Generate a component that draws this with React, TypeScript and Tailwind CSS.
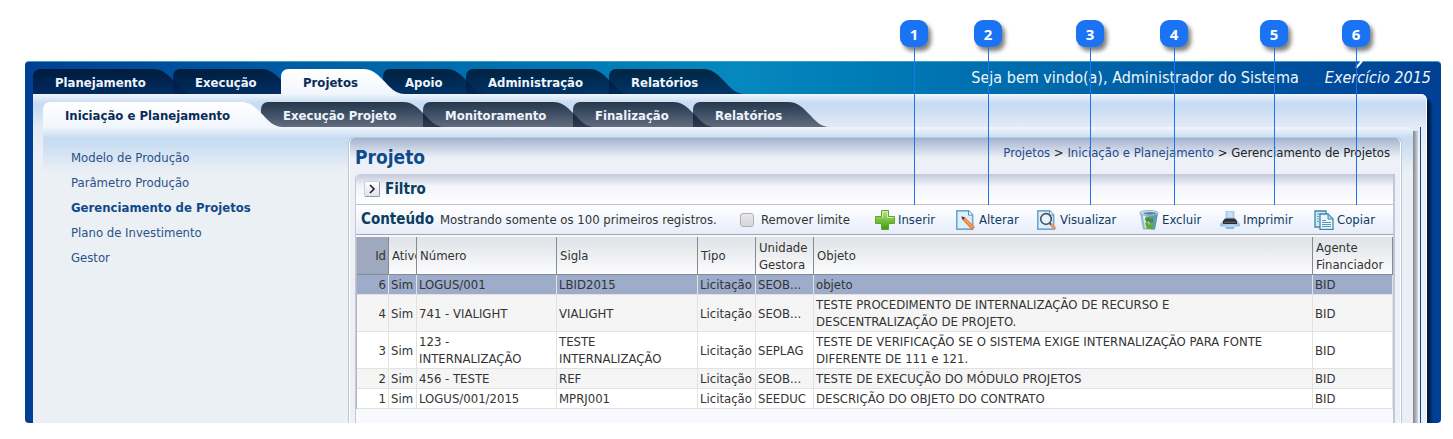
import type { ReactNode } from "react";

type TabItem = { label: string; width: string; active?: boolean };

const mainTabs: TabItem[] = [
  { label: "Planejamento", width: "w-[162px]" },
  { label: "Execução", width: "w-[130px]" },
  { label: "Projetos", width: "w-[124px]", active: true },
  { label: "Apoio", width: "w-[105px]" },
  { label: "Administração", width: "w-[165px]" },
  { label: "Relatórios", width: "w-[136px]" },
];

const subTabs: TabItem[] = [
  { label: "Iniciação e Planejamento", width: "w-[240px]", active: true },
  { label: "Execução Projeto", width: "w-[184px]" },
  { label: "Monitoramento", width: "w-[172px]" },
  { label: "Finalização", width: "w-[142px]" },
  { label: "Relatórios", width: "w-[137px]" },
];

const menu = [
  "Modelo de Produção",
  "Parâmetro Produção",
  "Gerenciamento de Projetos",
  "Plano de Investimento",
  "Gestor",
];

const rows = [
  [6, "LOGUS/001", "LBID2015", "SEOB...", "objeto"],
  [
    4,
    "741 - VIALIGHT",
    "VIALIGHT",
    "SEOB...",
    "TESTE PROCEDIMENTO DE INTERNALIZAÇÃO DE RECURSO E DESCENTRALIZAÇÃO DE PROJETO.",
  ],
  [
    3,
    "123 - INTERNALIZAÇÃO",
    "TESTE INTERNALIZAÇÃO",
    "SEPLAG",
    "TESTE DE VERIFICAÇÃO SE O SISTEMA EXIGE INTERNALIZAÇÃO PARA FONTE DIFERENTE DE 111 e 121.",
  ],
  [2, "456 - TESTE", "REF", "SEOB...", "TESTE DE EXECUÇÃO DO MÓDULO PROJETOS"],
  [1, "LOGUS/001/2015", "MPRJ001", "SEEDUC", "DESCRIÇÃO DO OBJETO DO CONTRATO"],
];

const callouts = [
  "left-[900px]",
  "left-[974px]",
  "left-[1076px]",
  "left-[1160px]",
  "left-[1260px]",
  "left-[1342px]",
];

const tabColors = {
  main: { fill: "from-[#00142dd9] to-[#002454cc]", top: "#00142d", topA: 0.85, bottom: "#002454", bottomA: 0.8 },
  sub: { fill: "from-[#000f23cc] to-[#141e379e]", top: "#000f23", topA: 0.8, bottom: "#141e37", bottomA: 0.62 },
  active: { fill: "from-[#ffffff] to-[#f1f6fd]", top: "#ffffff", topA: 1, bottom: "#f1f6fd", bottomA: 1 },
};

function Tab({ item, level }: { item: TabItem; level: "main" | "sub" }) {
  const kind = item.active ? "active" : level;
  const c = tabColors[kind];
  const id = `tab-${level}-${kind}-${item.label.length}`;
  return (
    <button
      type="button"
      className={`flex h-[25px] shrink-0 -mr-[22px] text-left text-[13px] leading-[27px] font-bold whitespace-nowrap ${item.width} ${
        item.active ? "relative z-10 text-[#0a2c55]" : "text-[#eef4fb]"
      }`}
    >
      <span className={`block h-full flex-1 min-w-0 rounded-tl-[7px] bg-linear-to-b pl-[22px] ${c.fill}`}>
        {item.label}
      </span>
      <svg className="h-full w-[42px] shrink-0" viewBox="0 0 42 25">
        <defs>
          <linearGradient id={id} x1="0" y1="0" x2="0" y2="1">
            <stop offset="0" stopColor={c.top} stopOpacity={c.topA} />
            <stop offset="1" stopColor={c.bottom} stopOpacity={c.bottomA} />
          </linearGradient>
        </defs>
        <path d="M0 0C9 0 13 4 20 11S32 25 42 25H0Z" fill={`url(#${id})`} />
      </svg>
    </button>
  );
}

function AddIcon() {
  return (
    <svg className="size-5" viewBox="0 0 20 20">
      <defs>
        <linearGradient id="add" x1="0" y1="0" x2="0" y2="1">
          <stop offset="0" stopColor="#c5e58a" />
          <stop offset=".5" stopColor="#7cc043" />
          <stop offset="1" stopColor="#3f9a16" />
        </linearGradient>
      </defs>
      <path d="M6.5 .5h7v6h6v7h-6v6h-7v-6h-6v-7h6Z" fill="url(#add)" stroke="#5da82a" />
      <path d="M7.5 7.5v-6h5v6h6" fill="none" stroke="#e0f3bd" strokeOpacity=".8" />
    </svg>
  );
}

function PageShape() {
  return (
    <>
      <path d="M.7 .7h12l4 4v14.500H.7Z" fill="#b8dcf2" stroke="#6ba6cd" strokeWidth="1.400" />
      <path d="M2 2h10v4h3.500v12H2Z" fill="#dceffa" />
      <path d="M12.500 1v4h4" fill="#fff" stroke="#4e92c0" />
    </>
  );
}

function EditIcon() {
  return (
    <svg className="size-5" viewBox="0 0 20 20">
      <PageShape />
      <path d="M6 7l3 .8 9.500 9.200-2.500 2.500-9-9.500Z" fill="#f08030" stroke="#e06a22" strokeWidth=".7" />
      <path d="M8.500 9l8.500 8.700" stroke="#ffc490" strokeWidth="1" />
      <path d="M5.300 6.300l3.700 1.500-2.200 2.200Z" fill="#3b3b3b" />
    </svg>
  );
}

function ViewIcon() {
  return (
    <svg className="size-5" viewBox="0 0 20 20">
      <PageShape />
      <circle cx="9" cy="9" r="5.300" fill="#e6f3fb" stroke="#4b5560" strokeWidth="1.700" />
      <path d="M12.500 13l2 2" stroke="#555" strokeWidth="2" />
      <path d="M14 14.500l4.500 4.500" stroke="#e89468" strokeWidth="3" />
    </svg>
  );
}

function TrashIcon() {
  return (
    <svg className="size-5" viewBox="0 0 20 20">
      <path d="M1 3l3 16.500h12L19 3Z" fill="#8fbbcf" />
      <path d="M10 4l9-1-3 16.500h-4Z" fill="#5f9bb8" />
      <path d="M3.500 5l2.500 13h2L6.500 5Z" fill="#d3e8f1" />
      <ellipse cx="10" cy="3" rx="9.200" ry="2.600" fill="#c9dfea" stroke="#79a9c1" strokeWidth=".8" />
      <ellipse cx="11" cy="3.400" rx="6.500" ry="1.300" fill="#55849b" />
      <path d="M6 8l4-1 1 2 3-1v4l-3 1-1-2-3 1Z" fill="#4c8f22" />
      <path d="M6 13l3-1v2l4 1 1-3 1 2-2 5H8Z" fill="#62ab2c" />
    </svg>
  );
}

function PrintIcon() {
  return (
    <svg className="size-5" viewBox="0 0 20 20">
      <path d="M5.500 1h9v8h-9Z" fill="#a9cdea" />
      <path d="M7.500 2h5v5h-5Z" fill="#c9e1f4" />
      <path d="M3 10.500L0 14v2.500h20V14l-3-3.500Z" fill="#9dc3e6" />
      <path d="M5 8.500h10l2 2.500v3H3v-3Z" fill="#2b2d31" />
      <path d="M4 11.500h12v1.500H4Z" fill="#55595f" />
      <path d="M5 14.500h10v3.500H5Z" fill="#b4d4ef" />
      <path d="M6 17h8v2H6Z" fill="#8ab7df" />
    </svg>
  );
}

function CopyIcon() {
  return (
    <svg className="size-5" viewBox="0 0 20 20">
      <path d="M1 1h11v16H1Z" fill="#d2e8f5" stroke="#3f86ad" strokeWidth="1.300" />
      <path d="M3 4h3M3 6.500h2M3 9h2M3 11.500h2" stroke="#6aa3c4" />
      <path d="M6 4h8l5 5v10.300H6Z" fill="#eef7fc" stroke="#3f86ad" strokeWidth="1.300" />
      <path d="M14 4v5h5Z" fill="#b0d5ea" stroke="#3f86ad" />
      <path d="M8 10.500h4M8 12.500h9M8 14.500h9M8 16.500h9" stroke="#5797bd" strokeWidth="1.200" />
    </svg>
  );
}

function ToolButton({ icon, label, width }: { icon: ReactNode; label: string; width: string }) {
  return (
    <button
      type="button"
      className={`flex shrink-0 items-center gap-[3px] whitespace-nowrap text-[#0d3a63] ${width}`}
    >
      {icon}
      {label}
    </button>
  );
}

function Callouts() {
  return (
    <div className="pointer-events-none absolute inset-0 z-20">
      <svg className="absolute top-[61px] left-[1355px] h-2 w-[10px]" viewBox="0 0 10 8">
        <path d="M1 7L7 0" stroke="#fff" strokeWidth="2" />
      </svg>
      {callouts.map((left, i) => (
        <div key={left} className={`absolute top-5 flex w-7 flex-col items-center ${left}`}>
          <span className="flex h-[27px] w-full items-center justify-center rounded-[9px] bg-[#1a73f2] font-['Noto_Sans',sans-serif] text-[15px] leading-5 font-bold text-white shadow-[3px_4px_4px_#00000080]">
            {i + 1}
          </span>
          <span className="h-[158px] w-px bg-[#1a73f2]" />
        </div>
      ))}
    </div>
  );
}

function ProjectTable() {
  const head = "border-r border-b border-[#858b94] bg-linear-to-b from-[#dfe2e7] to-[#fcfcfd] px-[3px] font-normal";
  return (
    <table className="w-full table-fixed border-separate border-spacing-0 border-l border-l-[#b5b8c0] text-left leading-[17px] text-[#333]">
      <colgroup>
        <col className="w-8" />
        <col className="w-7" />
        <col className="w-[140px]" />
        <col className="w-[141px]" />
        <col className="w-[58px]" />
        <col className="w-[58px]" />
        <col />
        <col className="w-20" />
      </colgroup>
      <thead>
        <tr className="h-[38px]">
          <th className="border-r border-b border-[#858b94] bg-[#9ea9bd] pr-[2px] text-right font-normal">Id</th>
          <th className={`overflow-hidden whitespace-nowrap ${head}`}>Ativo</th>
          <th className={head}>Número</th>
          <th className={head}>Sigla</th>
          <th className={head}>Tipo</th>
          <th className={head}>Unidade Gestora</th>
          <th className={head}>Objeto</th>
          <th className={head}>Agente Financiador</th>
        </tr>
      </thead>
      <tbody>
        {rows.map(([id, numero, sigla, unidade, objeto], i) => {
          const bg = i === 0 ? "bg-[#9dacca]" : i % 2 ? "bg-[#f5f5f5]" : "bg-white";
          const cell = `border-r border-b border-[#e2e2e2] py-px pl-[2px] ${bg}`;
          return (
            <tr key={id}>
              <td className={`text-right pr-[2px] ${cell}`}>{id}</td>
              <td className={`whitespace-nowrap ${cell}`}>Sim</td>
              <td className={`pr-5 ${cell}`}>{numero}</td>
              <td className={`pr-5 ${cell}`}>{sigla}</td>
              <td className={`whitespace-nowrap ${cell}`}>Licitação</td>
              <td className={`whitespace-nowrap ${cell}`}>{unidade}</td>
              <td className={`pr-8 ${cell}`}>{objeto}</td>
              <td className={cell}>BID</td>
            </tr>
          );
        })}
      </tbody>
    </table>
  );
}

export default function App() {
  return (
    <div className="relative bg-white pt-[61px] pr-3 pb-4 pl-[25px] font-['DejaVu_Sans_Condensed','DejaVu_Sans',sans-serif] text-[13px] leading-[17px]">
      <div className="overflow-hidden rounded-[4px] border-t border-t-[#3f9cc4] bg-linear-to-r from-[#004094] via-[#0689be] to-[#004094] pr-[14px] pl-2">
        <header className="-mr-[14px] flex justify-between pt-[7px]">
          <nav className="flex">
            {mainTabs.map((t) => (
              <Tab key={t.label} item={t} level="main" />
            ))}
          </nav>
          <div className="-mt-[3px] flex gap-[26px] pr-[10px] text-[16px] leading-6 whitespace-nowrap text-[#f0f6fc]">
            <span>Seja bem vindo(a), Administrador do Sistema</span>
            <em>Exercício 2015</em>
          </div>
        </header>

        <div className="rounded-tr-[6px] border-r border-white bg-[#ebf0f5] bg-[linear-gradient(#f0f6fd_0px,#c8dcf3_9px,#c8dcf3_14px,#e3eaf5_32px,#ebf0f5_60px)] pt-2 pl-[10px] shadow-[4px_5px_3px_#001c44]">
          <nav className="flex">
            {subTabs.map((t) => (
              <Tab key={t.label} item={t} level="sub" />
            ))}
          </nav>

          <div className="flex">
            <div className="flex min-w-0 flex-1 rounded-tr-[6px] bg-[#ebf0f5] bg-[linear-gradient(#f1f6fd_0px,#c7dcf3_11px,#c9ddf2_17px,#e3ebf5_38px,#ebf0f5_46px)] pr-[11px]">
              <nav className="w-[305px] shrink-0 pt-[18px] pl-7">
                <ul>
                  {menu.map((m) => (
                    <li key={m} className="leading-[25px]">
                      <a
                        href="#"
                        className={m === "Gerenciamento de Projetos" ? "font-bold text-[#11498a]" : "text-[#2a5288]"}
                      >
                        {m}
                      </a>
                    </li>
                  ))}
                </ul>
              </nav>

              <main className="mt-[10px] min-w-0 flex-1 rounded-t-[6px] border-x border-t border-[#b9c7db] bg-[#edf1f7] bg-[linear-gradient(#a3b2ce_0px,#edf1f7_20px)] px-[6px] shadow-[inset_1px_0_#fff,inset_-1px_0_#fff]">
                <div className="flex h-[36px] justify-between pt-[6px]">
                  <h1 className="text-[19px] leading-[26px] font-bold text-[#0e4b8c]">Projeto</h1>
                  <p className="pr-[5px] whitespace-nowrap text-[#222]">
                    <a href="#" className="text-[#1f4a8c]">Projetos</a> &gt;{" "}
                    <a href="#" className="text-[#1f4a8c]">Iniciação e Planejamento</a> &gt; Gerenciamento de Projetos
                  </p>
                </div>

                <section className="rounded-tl-[5px] border-r-2 border-l border-[#c3c7d6] bg-[#f8f9fc]">
                  <div className="flex h-[31px] items-center gap-[5px] rounded-tl-[5px] border-b border-[#bfc4d6] bg-linear-to-b from-[#c2c9d9] via-[#f2f4f9] via-40% to-white pl-2">
                    <button
                      type="button"
                      aria-label="Expandir filtro"
                      className="flex size-4 items-center justify-center rounded-[2px] border border-[#c9ced9] border-r-[#8f98ac] border-b-[#8f98ac] bg-linear-to-b from-white to-[#dfe3ec]"
                    >
                      <svg className="size-[10px]" viewBox="0 0 10 10">
                        <path d="M3 1l4 4-4 4" fill="none" stroke="#222" strokeWidth="1.600" />
                      </svg>
                    </button>
                    <h2 className="text-[15px] font-bold text-[#0b3c62]">Filtro</h2>
                  </div>

                  <div className="flex h-[30px] items-center border-b border-[#a1a5ae] bg-linear-to-b from-white to-[#e6edf9] pl-[5px]">
                    <h2 className="w-[79px] shrink-0 text-[15px] font-bold text-[#0b3c62]">Conteúdo</h2>
                    <span className="w-[300px] shrink-0 whitespace-nowrap text-[#333]">
                      Mostrando somente os 100 primeiros registros.
                    </span>
                    <label className="flex w-[135px] shrink-0 items-center gap-[7px] whitespace-nowrap text-[#333]">
                      <input
                        type="checkbox"
                        className="size-[14px] appearance-none rounded-[3px] border border-[#b0b0b0] bg-linear-to-b from-[#e9e9e9] to-[#d6d6d6]"
                      />
                      Remover limite
                    </label>
                    <ToolButton icon={<AddIcon />} label="Inserir" width="w-[81px]" />
                    <ToolButton icon={<EditIcon />} label="Alterar" width="w-[81px]" />
                    <ToolButton icon={<ViewIcon />} label="Visualizar" width="w-[102px]" />
                    <ToolButton icon={<TrashIcon />} label="Excluir" width="w-[81px]" />
                    <ToolButton icon={<PrintIcon />} label="Imprimir" width="w-[94px]" />
                    <ToolButton icon={<CopyIcon />} label="Copiar" width="w-[70px]" />
                  </div>

                  <div className="pt-[2px] pb-[14px]">
                    <ProjectTable />
                  </div>
                </section>
              </main>
            </div>
            <div className="mt-1 w-[5px] bg-linear-to-r from-[#7f858b] to-[#d4d8dc]" />
            <div className="mr-[5px] ml-[2px] w-px bg-[#0a4a98]" />
          </div>
        </div>
      </div>
      <Callouts />
    </div>
  );
}
